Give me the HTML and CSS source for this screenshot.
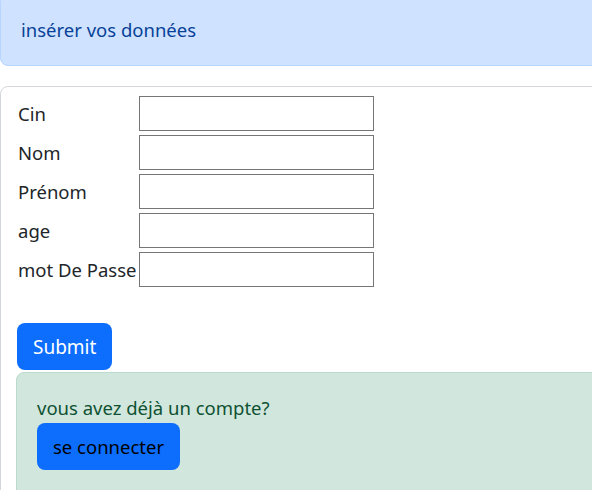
FILE: index.html
```html
<!DOCTYPE html>
<html lang="fr">
<head>
<meta charset="utf-8">
<title>Inscription</title>
<link rel="stylesheet" href="styles.css">
</head>
<body>
<div class="viewport">
  <div class="page">
    <div class="alert alert-primary">insérer vos données</div>
    <div class="card">
      <form class="form">
        <div class="fields">
          <label class="lbl" for="cin">Cin</label><input class="inp" id="cin" type="text">
          <label class="lbl" for="nom">Nom</label><input class="inp" id="nom" type="text">
          <label class="lbl" for="prenom">Prénom</label><input class="inp" id="prenom" type="text">
          <label class="lbl" for="age">age</label><input class="inp" id="age" type="text">
          <label class="lbl" for="mdp">mot De Passe</label><input class="inp" id="mdp" type="password">
        </div>
        <button class="btn btn-submit" type="button">Submit</button>
      </form>
      <div class="alert alert-success">
        <div class="question">vous avez déjà un compte?</div>
        <button class="btn btn-connect" type="button">se connecter</button>
      </div>
    </div>
  </div>
</div>
</body>
</html>
```
FILE: styles.css
```css
html, body {
  margin: 0;
  padding: 0;
  background: #fff;
}
body {
  font-family: "Noto Sans", "Open Sans", "DejaVu Sans", sans-serif;
  font-size: 18.5px;
  line-height: 30px;
  color: #212529;
}
.viewport {
  width: 592px;
  height: 490px;
  overflow: hidden;
}
.page {
  width: 640px;
  display: flex;
  flex-direction: column;
}
.alert {
  border: 1px solid transparent;
  border-radius: 8px;
  padding: 20px;
}
.alert-primary {
  margin-top: -6px;
  background: #cfe2ff;
  border-color: #b6d4fe;
  color: #084298;
}
.card {
  margin-top: 20px;
  border: 1px solid #d3d7db;
  border-radius: 8px;
  padding: 9px 0 0 16px;
}
.form {
  display: flex;
  flex-direction: column;
  align-items: flex-start;
}
.fields {
  display: grid;
  grid-template-columns: 122px 235px;
  row-gap: 4px;
  align-items: center;
}
.lbl {
  padding-left: 1px;
  white-space: nowrap;
}
.inp {
  box-sizing: border-box;
  width: 235px;
  height: 35px;
  margin: 0;
  border: 1px solid #767676;
  border-radius: 0;
  background: #fff;
  font: inherit;
}
.btn {
  box-sizing: border-box;
  height: 47px;
  padding: 0 16px;
  border: 0;
  border-radius: 8px;
  background: #0d6efd;
  font: inherit;
  font-size: 19px;
}
.btn-submit {
  margin-top: 36px;
  color: #fff;
}
.alert-success {
  margin-top: 2px;
  margin-left: -1px;
  background: #d1e7dd;
  border-color: #badbcc;
  color: #0f5132;
  padding-bottom: 30px;
}
.question {
  height: 30px;
}
.btn-connect {
  color: #000;
  font-size: 18.5px;
}
```
